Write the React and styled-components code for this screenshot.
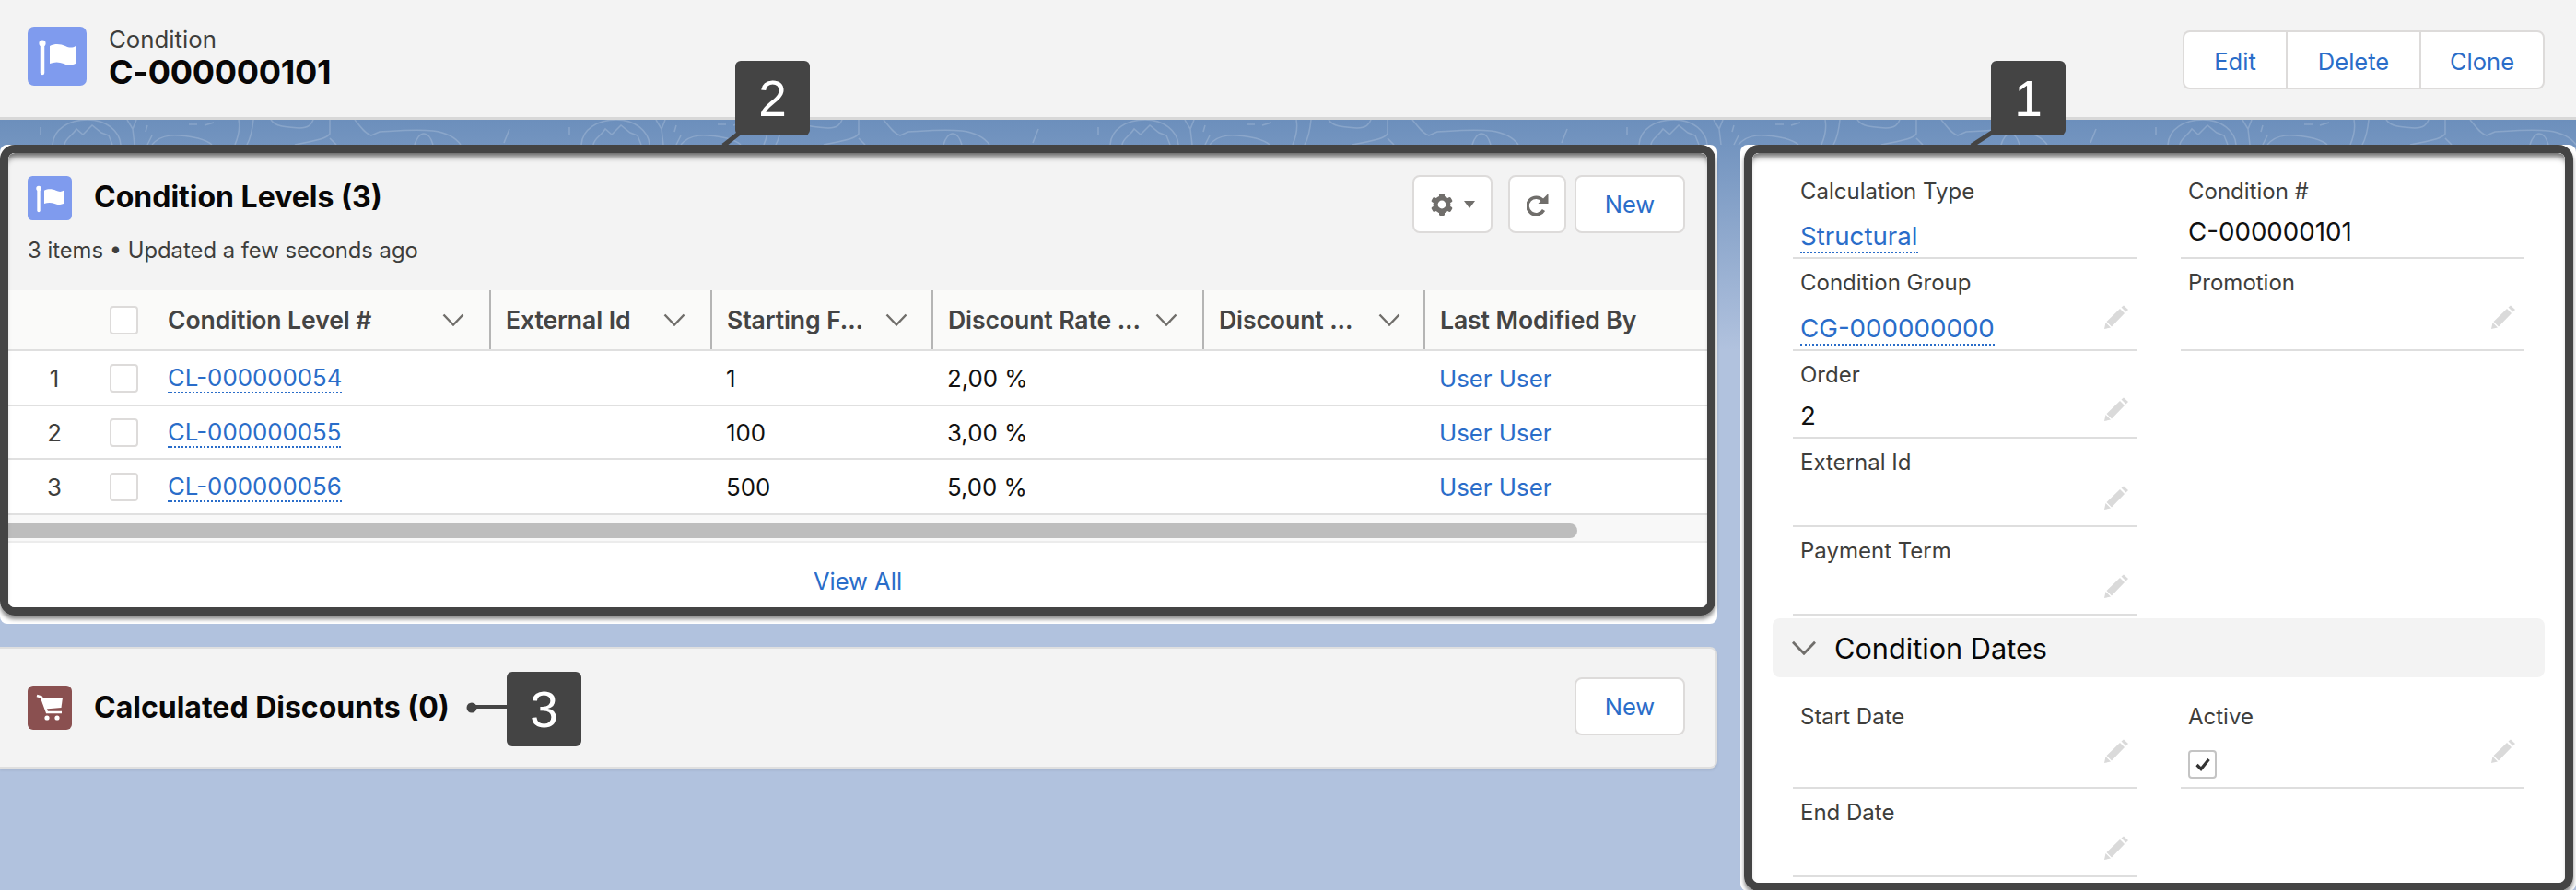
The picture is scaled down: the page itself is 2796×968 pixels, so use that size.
import React from 'react';
import styled, { createGlobalStyle } from 'styled-components';

const GlobalStyle = createGlobalStyle`
  html, body {
    margin: 0;
    padding: 0;
    background: #fff;
  }
  * {
    box-sizing: border-box;
  }
  body {
    font-family: 'Inter', 'Liberation Sans', sans-serif;
    color: #111;
  }
`;

const Page = styled.div`
  position: relative;
  width: 2796px;
  height: 966px;
  overflow: hidden;
`;

const PageHeader = styled.header`
  height: 130px;
  background: #f3f3f3;
  border-bottom: 3px solid #d8d8d8;
  padding: 29px 34px 0 30px;
  display: flex;
  justify-content: space-between;
`;

const TitleGroup = styled.div`
  display: flex;
  gap: 24px;
`;

const TitleText = styled.div`
  display: flex;
  flex-direction: column;
`;

const ObjectName = styled.div`
  font-size: 25.8px;
  line-height: 28px;
  color: #3e3e3c;
`;

const RecordName = styled.div`
  font-size: 36px;
  line-height: 42px;
  letter-spacing: -0.3px;
  font-weight: 700;
  color: #080707;
`;

const ActionGroup = styled.div`
  display: flex;
  height: 64px;
  margin-top: 4px;
  background: #fff;
  border: 2px solid #dddbda;
  border-radius: 8px;
`;

const Action = styled.div`
  display: flex;
  align-items: center;
  justify-content: center;
  width: ${p => p.$w}px;
  padding-top: 2px;
  font-size: 25.5px;
  color: #2a6dc9;
  & + & {
    border-left: 2px solid #dddbda;
  }
`;

const Main = styled.main`
  position: relative;
  height: 836px;
  padding-top: 27px;
  display: grid;
  grid-template-columns: 1864px 907px;
  column-gap: 25px;
  background: linear-gradient(#6c8fbc 0, #b1c2de 250px);
`;

const Topo = styled.svg`
  position: absolute;
  left: 0;
  top: 0;
  width: 100%;
  height: 320px;
`;

const LeftColumn = styled.div`
  position: relative;
  display: flex;
  flex-direction: column;
  gap: 25px;
`;

const Frame = styled.div`
  position: relative;
  background: #fff;
  border-radius: 8px;
  padding: ${p => p.$pad};
`;

const Highlight = styled.div`
  border: 9px solid #444;
  border-radius: 16px;
  overflow: hidden;
  box-shadow: 0 4px 4px rgba(0, 0, 0, 0.45);
  position: relative;
  &::after {
    content: '';
    position: absolute;
    inset: 0;
    border-radius: 7px;
    box-shadow: inset 0 8px 6px -4px rgba(0, 0, 0, 0.6);
    pointer-events: none;
  }
`;

const CardHeader = styled.div`
  height: 149px;
  background: #f3f3f3;
  padding: 24px 24px 0 21px;
  display: flex;
  justify-content: space-between;
`;

const CardTitleBlock = styled.div`
  display: flex;
  flex-direction: column;
`;

const CardTitleRow = styled.div`
  display: flex;
  align-items: center;
  gap: 24px;
  margin-top: ${p => p.$shift || 0}px;
`;

const CardTitle = styled.h2`
  margin: 0;
  padding-bottom: ${p => p.$lift || 0}px;
  font-size: 32px;
  line-height: 48px;
  font-weight: 700;
  color: #080707;
`;

const ItemInfo = styled.div`
  margin-top: 17px;
  font-size: 23.8px;
  line-height: 30px;
  color: #3e3e3c;
`;

const ButtonRow = styled.div`
  display: flex;
`;

const Button = styled.div`
  display: flex;
  align-items: center;
  justify-content: center;
  gap: 11px;
  width: ${p => p.$w}px;
  height: 63px;
  margin-left: ${p => p.$gap || 0}px;
  background: #fff;
  border: 2px solid #dddbda;
  border-radius: 8px;
  font-size: 25.5px;
  color: #2a6dc9;
`;

const Row = styled.div`
  display: grid;
  grid-template-columns: 100px 55px 367px 240px 240px 294px 240px 308px;
  height: ${p => p.$h}px;
  border-bottom: 2px solid ${p => (p.$head ? '#dfdfdf' : '#e0e0e0')};
  background: ${p => (p.$head ? '#fafaf9' : '#fff')};
`;

const HeadCell = styled.div`
  display: flex;
  align-items: center;
  justify-content: space-between;
  padding: 0 ${p => p.$pr || 24}px 0 ${p => (p.$sep ? 16 : 18)}px;
  font-size: 26.6px;
  font-weight: 600;
  letter-spacing: -0.1px;
  color: #444;
  white-space: nowrap;
  border-left: ${p => (p.$sep ? '2px solid #b5b5b5' : 'none')};
`;

const Cell = styled.div`
  display: flex;
  align-items: center;
  padding-left: ${p => p.$pl || 17}px;
  font-size: 25.8px;
  color: #111;
`;

const NumberCell = styled(Cell)`
  padding-left: 0;
  justify-content: center;
  color: #3e3e3c;
`;

const CheckCell = styled.div`
  display: flex;
  align-items: center;
  padding-left: 10px;
`;

const CheckBox = styled.div`
  display: flex;
  align-items: center;
  justify-content: center;
  flex: none;
  align-self: center;
  width: 31px;
  height: 31px;
  background: #fff;
  border: 2px solid ${p => (p.$dark ? '#c4c4c4' : '#dddbda')};
  border-radius: 4px;
`;

const RecordLink = styled.span`
  color: #2a6dc9;
  border-bottom: 2px dotted #2a6dc9;
  line-height: 31px;
`;

const FieldLink = styled(RecordLink)`
  line-height: 29px;
`;

const PlainLink = styled.span`
  color: #2a6dc9;
`;

const ScrollTrack = styled.div`
  height: 30px;
  padding-top: 9px;
  background: #f8f8f8;
  border-bottom: 2px solid #ececec;
`;

const ScrollThumb = styled.div`
  width: 1703px;
  height: 16px;
  background: #bdbdbd;
  border-radius: 0 8px 8px 0;
`;

const CardFooter = styled.div`
  height: 70px;
  display: flex;
  align-items: center;
  justify-content: center;
  padding-top: 12px;
  font-size: 25.5px;
  color: #2a6dc9;
  background: #fff;
`;

const DiscountCard = styled.section`
  height: 132px;
  padding: 0 33px 3px 30px;
  display: flex;
  align-items: center;
  justify-content: space-between;
  background: #f3f3f3;
  border: 2px solid #dfdfdf;
  border-left: none;
  border-radius: 0 8px 8px 0;
  box-shadow: 0 2px 3px rgba(0, 0, 0, 0.08);
`;

const RightBody = styled.div`
  height: 792px;
  background: #fff;
  padding: 16px 22px 0 22px;
`;

const FieldGrid = styled.div`
  display: grid;
  grid-template-columns: 374px 373px;
  column-gap: 47px;
  margin-left: 22px;
  align-items: start;
`;

const Field = styled.div`
  height: ${p => p.$h}px;
  display: flex;
  flex-direction: column;
  justify-content: space-between;
  padding-top: 11px;
  border-bottom: 2px solid #dedede;
`;

const Label = styled.div`
  padding-left: 8px;
  font-size: 24px;
  line-height: 30px;
  color: #3e3e3c;
`;

const ValueRow = styled.div`
  display: flex;
  justify-content: space-between;
  align-items: flex-end;
  height: 50px;
  padding: 0 10px 0 8px;
`;

const Value = styled.div`
  align-self: center;
  font-size: 27.7px;
  line-height: 31px;
  margin: ${p => (p.$up ? `0 0 ${p.$up}px` : '4px 0 0')};
  color: #111;
`;

const Pencil = styled.svg`
  width: 26px;
  height: 26px;
  margin-bottom: ${p => p.$lift}px;
  flex: none;
`;

const SectionBar = styled.div`
  height: 64px;
  margin: 3px 0 17px;
  display: flex;
  align-items: center;
  gap: 19px;
  padding-left: 20px;
  background: #f3f3f3;
  border-radius: 8px;
  font-size: 30.7px;
  color: #080707;
`;

const Callout = styled.div`
  position: absolute;
  left: ${p => p.$left}px;
  top: ${p => p.$top}px;
  width: 81px;
  height: 81px;
  display: flex;
  align-items: center;
  justify-content: center;
  background: #444;
  border-radius: 6px;
  color: #fff;
  font-family: 'Liberation Sans', sans-serif;
  font-size: 55px;
`;

const Leader = styled.svg`
  position: absolute;
  left: -50px;
  top: 0;
  width: 60px;
  height: 100px;
  overflow: visible;
`;

const Flag = ({ size }) => (
  <svg width={size} height={size} viewBox="0 0 64 64">
    <rect width="64" height="64" rx="7" fill="#7f9bee" />
    <path d="M16 20V50" stroke="#fff" strokeWidth="4.5" strokeLinecap="round" />
    <circle cx="16" cy="18" r="3.6" fill="#fff" />
    <path d="M24 21C30 18 36 19 41 21C45 23 49 23 52 21V40C47 42 43 42 39 40C34 38 29 38 24 40Z" fill="#fff" />
  </svg>
);

const Cart = ({ size }) => (
  <svg width={size} height={size} viewBox="0 0 48 48">
    <rect width="48" height="48" rx="6" fill="#8a5050" />
    <path d="M10 11L15 12.5L21 29H37" stroke="#fff" strokeWidth="2.6" fill="none" />
    <path d="M15 13H38L36.5 24L19 25.5Z" fill="#fff" />
    <circle cx="21" cy="35" r="2.6" fill="#fff" />
    <circle cx="32" cy="35" r="2.6" fill="#fff" />
  </svg>
);

const Gear = () => (
  <svg width="26" height="26" viewBox="0 0 26 26">
    {[0, 60, 120].map(a => (
      <rect key={a} x="10" y="1" width="6" height="24" rx="1.5" fill="#706e6b" transform={`rotate(${a} 13 13)`} />
    ))}
    <circle cx="13" cy="13" r="7" fill="none" stroke="#706e6b" strokeWidth="5" />
    <circle cx="13" cy="13" r="4.4" fill="#fff" />
  </svg>
);

const Caret = () => (
  <svg width="12" height="8" viewBox="0 0 12 8">
    <path d="M0 0H12L6 8Z" fill="#706e6b" />
  </svg>
);

const Refresh = () => (
  <svg width="24" height="24" viewBox="0 0 24 24">
    <path d="M17.5 7.5A9.3 9.3 0 1 0 18.5 18" fill="none" stroke="#706e6b" strokeWidth="3.6" />
    <path d="M23.5 0V11H12.5Z" fill="#706e6b" />
  </svg>
);

const Chevron = ({ color = '#706e6b', w = 24, h = 14 }) => (
  <svg width={w} height={h} viewBox="0 0 24 14">
    <path d="M1.5 1.5L12 12.5L22.5 1.5" fill="none" stroke={color} strokeWidth="2.4" />
  </svg>
);

const EditPencil = ({ lift }) => (
  <Pencil $lift={lift} viewBox="0 0 26 26">
    <path d="M0 26L1.5 19L7 24.5Z" fill="#dadada" />
    <path d="M2.5 18L17 4L22 9L8 23.5Z" fill="#dadada" />
    <path d="M18.5 2.5L21 0.5L26 5L23.5 7.5Z" fill="#dadada" />
  </Pencil>
);

const rows = [
  { h: 60, n: 1, id: 'CL-000000054', from: '1', rate: '2,00 %' },
  { h: 58, n: 2, id: 'CL-000000055', from: '100', rate: '3,00 %' },
  { h: 60, n: 3, id: 'CL-000000056', from: '500', rate: '5,00 %' },
];

const heads = [
  { label: 'External Id', pr: 27 },
  { label: 'Starting F...', pr: 26 },
  { label: 'Discount Rate ...', pr: 27 },
  { label: 'Discount ...', pr: 25 },
];

export default function App() {
  return (
    <Page>
      <GlobalStyle />
      <PageHeader>
        <TitleGroup>
          <Flag size={64} />
          <TitleText>
            <ObjectName>Condition</ObjectName>
            <RecordName>C-000000101</RecordName>
          </TitleText>
        </TitleGroup>
        <ActionGroup>
          <Action $w={110}>Edit</Action>
          <Action $w={145}>Delete</Action>
          <Action $w={134}>Clone</Action>
        </ActionGroup>
      </PageHeader>

      <Main>
        <Topo>
          <defs>
            <pattern id="topo" width="574" height="320" patternUnits="userSpaceOnUse">
              <g fill="none" stroke="#fff" strokeOpacity="0.18" strokeWidth="1.5">
                <path d="M44 8V17" />
                <path d="M57 27C58 10 75 0 95 0C115 0 130 12 131 27" />
                <path d="M70 27C71 20 78 18 83 10L90 16L100 6L110 14L118 17L122 27" />
                <path d="M138 0L144 10L148 0M144 10L146 27" />
                <path d="M160 6L158 13M165 17L160 27" />
                <path d="M165 27C175 15 190 15 215 20C222 22 228 25 230 27" />
                <path d="M205 5H214M222 6L232 3" />
                <path d="M259 0C261 10 258 20 255 27M275 0C274 10 272 20 268 27" />
                <path d="M294 0C300 8 310 8 325 9C335 9 338 5 340 0" />
                <path d="M358 0V15C355 20 345 22 330 25L320 27M358 20L365 27" />
                <path d="M385 0C392 8 396 15 403 17L412 13C430 12 450 10 470 12C485 14 495 20 500 27" />
                <path d="M450 27C452 20 456 15 460 15C465 15 468 20 470 27" />
                <path d="M553 10L547 25" />
                <path d="M20 30C60 90 10 140 40 220C60 270 30 300 20 320" />
                <path d="M300 30C340 120 280 180 320 320" />
                <path d="M500 30C470 100 560 160 520 320" />
              </g>
            </pattern>
          </defs>
          <rect width="100%" height="100%" fill="url(#topo)" />
        </Topo>

        <LeftColumn>
          <Frame $pad="0 2px 9px 0">
            <Highlight>
              <CardHeader>
                <CardTitleBlock>
                  <CardTitleRow>
                    <Flag size={48} />
                    <CardTitle $lift={2}>Condition Levels (3)</CardTitle>
                  </CardTitleRow>
                  <ItemInfo>3 items • Updated a few seconds ago</ItemInfo>
                </CardTitleBlock>
                <ButtonRow>
                  <Button $w={87}>
                    <Gear />
                    <Caret />
                  </Button>
                  <Button $w={63} $gap={17}>
                    <Refresh />
                  </Button>
                  <Button $w={120} $gap={9}>New</Button>
                </ButtonRow>
              </CardHeader>

              <Row $head $h={66}>
                <div />
                <CheckCell><CheckBox /></CheckCell>
                <HeadCell $pr={27}>
                  Condition Level #
                  <Chevron />
                </HeadCell>
                {heads.map(h => (
                  <HeadCell key={h.label} $sep $pr={h.pr}>
                    {h.label}
                    <Chevron />
                  </HeadCell>
                ))}
                <HeadCell $sep>Last Modified By</HeadCell>
              </Row>

              {rows.map(r => (
                <Row key={r.n} $h={r.h}>
                  <NumberCell>{r.n}</NumberCell>
                  <CheckCell><CheckBox /></CheckCell>
                  <Cell $pl={18}><RecordLink>{r.id}</RecordLink></Cell>
                  <Cell />
                  <Cell>{r.from}</Cell>
                  <Cell>{r.rate}</Cell>
                  <Cell />
                  <Cell><PlainLink>User User</PlainLink></Cell>
                </Row>
              ))}

              <ScrollTrack>
                <ScrollThumb />
              </ScrollTrack>
              <CardFooter>View All</CardFooter>
            </Highlight>
          </Frame>

          <DiscountCard>
            <CardTitleRow $shift={3}>
              <Cart size={48} />
              <CardTitle>Calculated Discounts (0)</CardTitle>
            </CardTitleRow>
            <Button $w={120}>New</Button>
          </DiscountCard>
        </LeftColumn>

        <Frame $pad="0 3px 0 4px">
          <Highlight>
            <RightBody>
              <FieldGrid>
                <Field $h={99}>
                  <Label>Calculation Type</Label>
                  <ValueRow><Value><FieldLink>Structural</FieldLink></Value></ValueRow>
                </Field>
                <Field $h={99}>
                  <Label>Condition #</Label>
                  <ValueRow><Value $up={6}>C-000000101</Value></ValueRow>
                </Field>
                <Field $h={100}>
                  <Label>Condition Group</Label>
                  <ValueRow>
                    <Value><FieldLink>CG-000000000</FieldLink></Value>
                    <EditPencil lift={22} />
                  </ValueRow>
                </Field>
                <Field $h={100}>
                  <Label>Promotion</Label>
                  <ValueRow>
                    <span />
                    <EditPencil lift={22} />
                  </ValueRow>
                </Field>
                <Field $h={95}>
                  <Label>Order</Label>
                  <ValueRow>
                    <Value>2</Value>
                    <EditPencil lift={17} />
                  </ValueRow>
                </Field>
                <div />
                <Field $h={96}>
                  <Label>External Id</Label>
                  <ValueRow>
                    <span />
                    <EditPencil lift={17} />
                  </ValueRow>
                </Field>
                <div />
                <Field $h={96}>
                  <Label>Payment Term</Label>
                  <ValueRow>
                    <span />
                    <EditPencil lift={17} />
                  </ValueRow>
                </Field>
              </FieldGrid>

              <SectionBar>
                <Chevron w={28} h={16} />
                Condition Dates
              </SectionBar>

              <FieldGrid>
                <Field $h={104}>
                  <Label>Start Date</Label>
                  <ValueRow>
                    <span />
                    <EditPencil lift={26} />
                  </ValueRow>
                </Field>
                <Field $h={104}>
                  <Label>Active</Label>
                  <ValueRow>
                    <CheckBox $dark>
                      <svg width="16" height="15" viewBox="0 0 16 15">
                        <path d="M1.5 8L6 12.5L14.5 2" fill="none" stroke="#333" strokeWidth="3.2" />
                      </svg>
                    </CheckBox>
                    <EditPencil lift={26} />
                  </ValueRow>
                </Field>
                <Field $h={96}>
                  <Label>End Date</Label>
                  <ValueRow>
                    <span />
                    <EditPencil lift={17} />
                  </ValueRow>
                </Field>
              </FieldGrid>
            </RightBody>
          </Highlight>
        </Frame>
      </Main>

      <Callout $left={798} $top={66}>
        2
        <Leader>
          <path d="M55 78L37 92" stroke="#444" strokeWidth="5" />
        </Leader>
      </Callout>
      <Callout $left={2161} $top={66}>
        1
        <Leader>
          <path d="M54 76L29 92" stroke="#444" strokeWidth="5" />
        </Leader>
      </Callout>
      <Callout $left={550} $top={729}>
        3
        <Leader>
          <path d="M12 38H52" stroke="#444" strokeWidth="4" />
          <circle cx="12" cy="39" r="5.5" fill="#444" />
        </Leader>
      </Callout>
    </Page>
  );
}
